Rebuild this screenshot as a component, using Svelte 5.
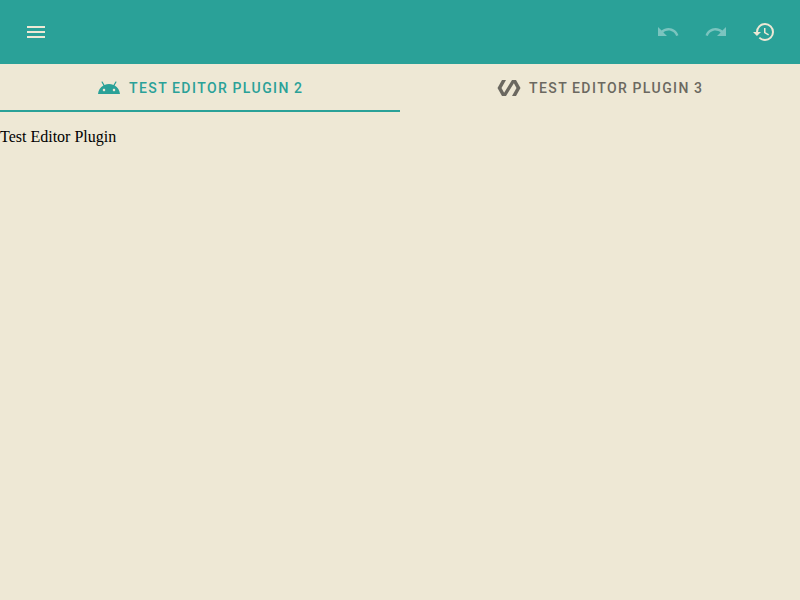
<script>
  const tabs = [
    {
      label: 'Test Editor Plugin 2',
      active: true,
      icon: 'M17.6 9.48l1.84-3.18c.16-.31.04-.69-.26-.85-.29-.15-.65-.06-.83.22l-1.88 3.24c-2.86-1.21-6.08-1.21-8.94 0L5.65 5.67c-.19-.29-.58-.38-.87-.2-.28.18-.37.54-.22.83L6.4 9.48C3.3 11.25 1.28 14.44 1 18h22c-.28-3.56-2.3-6.75-5.4-8.52zM7 15.25c-.69 0-1.25-.56-1.25-1.25s.56-1.25 1.25-1.25 1.25.56 1.25 1.25-.56 1.25-1.25 1.25zm10 0c-.69 0-1.25-.56-1.25-1.25s.56-1.25 1.25-1.25 1.25.56 1.25 1.25-.56 1.25-1.25 1.25z'
    },
    {
      label: 'Test Editor Plugin 3',
      active: false,
      icon: 'M19 4h-4L7.11 16.63 4.5 12 9 4H5L.5 12 5 20h4l7.89-12.63L19.5 12 15 20h4l4.5-8z'
    }
  ];

  const actions = [
    {
      label: 'Undo',
      disabled: true,
      icon: 'M12.5 8c-2.65 0-5.05.99-6.9 2.6L2 7v9h9l-3.62-3.62c1.39-1.16 3.16-1.88 5.12-1.88 3.54 0 6.55 2.31 7.6 5.5l2.37-.78C21.08 11.03 17.15 8 12.5 8z'
    },
    {
      label: 'Redo',
      disabled: true,
      icon: 'M18.4 10.6C16.55 8.99 14.15 8 11.5 8c-4.65 0-8.58 3.03-9.96 7.22L3.9 16c1.05-3.19 4.05-5.5 7.6-5.5 1.95 0 3.73.72 5.12 1.88L13 16h9V7l-3.6 3.6z'
    },
    {
      label: 'History',
      disabled: false,
      icon: 'M13.5 8H12v5l4.28 2.54.72-1.21-3.5-2.08V8M13 3a9 9 0 0 0-9 9H1l3.96 4.03L9 12H6a7 7 0 0 1 7-7 7 7 0 0 1 7 7 7 7 0 0 1-7 7c-1.93 0-3.68-.79-4.94-2.06l-1.42 1.42A8.896 8.896 0 0 0 13 21a9 9 0 0 0 9-9 9 9 0 0 0-9-9'
    }
  ];
</script>

<div class="app">
  <header>
    <button class="action" aria-label="Menu">
      <svg viewBox="0 0 24 24"><path d="M3 18h18v-2H3v2zm0-5h18v-2H3v2zm0-7v2h18V6H3z" /></svg>
    </button>
    <div class="actions">
      {#each actions as action}
        <button class="action" aria-label={action.label} disabled={action.disabled}>
          <svg viewBox="0 0 24 24"><path d={action.icon} /></svg>
        </button>
      {/each}
    </div>
  </header>

  <div class="tabs" role="tablist">
    {#each tabs as tab}
      <button class="tab" class:active={tab.active} role="tab" aria-selected={tab.active}>
        <svg viewBox="0 0 24 24"><path d={tab.icon} /></svg>
        <span>{tab.label}</span>
      </button>
    {/each}
  </div>

  <main><p>Test Editor Plugin</p></main>
</div>

<style>
  :global(body) {
    margin: 0;
    background: #eee8d5;
  }

  .app {
    min-height: 100vh;
    background: #eee8d5;
  }

  header {
    box-sizing: border-box;
    display: flex;
    align-items: center;
    justify-content: space-between;
    height: 64px;
    padding: 8px 12px;
    background: #2aa198;
    color: #eee8d5;
  }

  button {
    margin: 0;
    border: 0;
    background: none;
    color: inherit;
  }

  svg {
    display: block;
    flex: none;
    width: 24px;
    height: 24px;
    fill: currentColor;
  }

  .actions {
    display: flex;
  }

  .action {
    width: 48px;
    height: 48px;
    padding: 12px;
  }

  .action:disabled {
    color: rgba(255, 255, 255, 0.38);
  }

  .tabs {
    display: flex;
    height: 48px;
  }

  .tab {
    display: flex;
    flex: 1;
    align-items: center;
    justify-content: center;
    gap: 8px;
    box-sizing: border-box;
    height: 48px;
    padding: 2px 24px 0;
    border-bottom: 2px solid transparent;
    font: 500 14px/20px Roboto, sans-serif;
    letter-spacing: 1.45px;
    word-spacing: -0.8px;
    text-transform: uppercase;
    color: #6b6860;
  }

  .tab span {
    margin-left: 0.4px;
  }

  .tab.active {
    border-color: #2aa198;
    color: #2aa198;
  }

  main p {
    margin: 16px 0;
    font: 16px/18px 'Liberation Serif', serif;
    color: #000;
  }
</style>
